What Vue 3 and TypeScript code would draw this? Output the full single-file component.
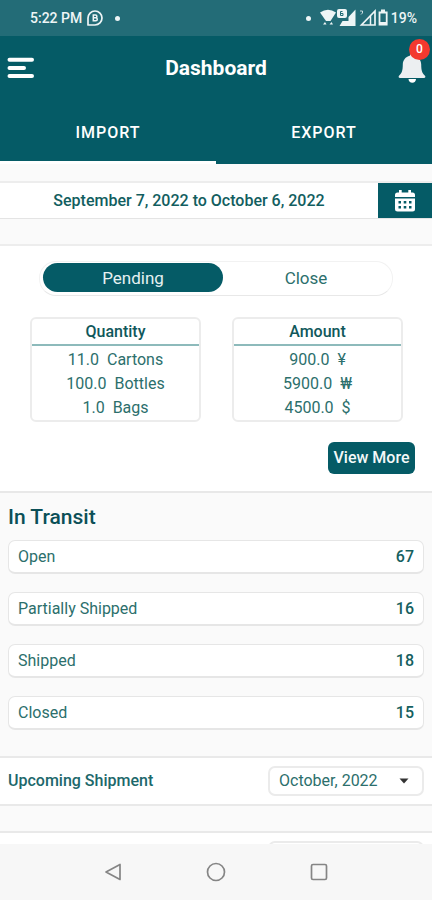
<script setup lang="ts">
import { ref } from 'vue'

interface Line {
  value: string
  unit: string
}
interface Summary {
  title: string
  lines: Line[]
}
interface TransitRow {
  label: string
  count: number
}

const tabs: string[] = ['IMPORT', 'EXPORT']
const activeTab = ref<string>('IMPORT')

const states: string[] = ['Pending', 'Close']
const activeState = ref<string>('Pending')

const summaries: Summary[] = [
  {
    title: 'Quantity',
    lines: [
      { value: '11.0', unit: 'Cartons' },
      { value: '100.0', unit: 'Bottles' },
      { value: '1.0', unit: 'Bags' },
    ],
  },
  {
    title: 'Amount',
    lines: [
      { value: '900.0', unit: '¥' },
      { value: '5900.0', unit: '₩' },
      { value: '4500.0', unit: '$' },
    ],
  },
]

const transit: TransitRow[] = [
  { label: 'Open', count: 67 },
  { label: 'Partially Shipped', count: 16 },
  { label: 'Shipped', count: 18 },
  { label: 'Closed', count: 15 },
]

const month = ref<string>('October, 2022')
</script>

<template>
  <div class="screen">
    <div class="status">
      <div class="status-side">
        <span>5:22 PM</span>
        <svg class="chat" viewBox="0 0 18 18" width="18" height="18" aria-hidden="true">
          <path d="M2 16V9a7 7 0 1 1 7 7z" fill="none" stroke="currentColor" stroke-width="1.7" stroke-linejoin="round" />
          <path d="M7.300 6h2.200a1.300 1.300 0 0 1 0 2.800H7.300zM7.300 8.800h2.500a1.500 1.500 0 0 1 0 3H7.300z" fill="none" stroke="currentColor" stroke-width="1.500" />
        </svg>
        <i class="dot"></i>
      </div>
      <div class="status-side status-right">
        <i class="dot"></i>
        <svg viewBox="0 0 70 20" width="70" height="20" aria-hidden="true">
          <path d="M1 4.500Q9 -1 17 4.500L11.500 13H7z" fill="currentColor" />
          <path d="M4 16.500l2-2.500 1.500 2.500zM10.500 16.500l2-2.500 1.500 2.500z" fill="currentColor" />
          <rect x="18" y="1" width="10" height="9" rx="2" fill="currentColor" />
          <path d="M23.500 3.500h-2v4h2.500v-2h-2" fill="none" stroke="#236c77" stroke-width="1" />
          <path d="M36.500 1.500V18H20.500l3-5h6V9z" fill="currentColor" />
          <path d="M41 3h2.500v2l-1.500 1.500" fill="none" stroke="currentColor" stroke-width="1" opacity=".8" />
          <path d="M56 3v14H42.500z" fill="none" stroke="currentColor" stroke-width="1.700" />
          <path d="M51.500 8v9" stroke="currentColor" stroke-width="1.500" />
          <path d="M60.500 4.500h7.200v12h-7.200z" fill="none" stroke="currentColor" stroke-width="1.800" />
          <path d="M62 1.500h4v3h-4zM60.500 14h7v3h-7z" fill="currentColor" />
        </svg>
        <span>19%</span>
      </div>
    </div>

    <header class="header">
      <div class="bar">
        <button class="icon-button" type="button" aria-label="Menu">
          <svg viewBox="0 0 28 22" width="28" height="22">
            <path d="M2.500 2.700h22.500M2.500 11h14.500M2.500 19h22.500" stroke="#fff" stroke-width="4" stroke-linecap="round" />
          </svg>
        </button>
        <h1>Dashboard</h1>
        <button class="icon-button bell" type="button" aria-label="Notifications">
          <svg viewBox="0 0 28 30" width="28" height="30">
            <path d="M14 0.500a2.200 2.200 0 0 0-2.200 2.200C7.500 3.700 4.800 7.200 4.800 11.500c0 6-1 8.700-3.800 11.200-.8.800-.3 2.300 1 2.300h24c1.300 0 1.800-1.500 1-2.300-2.800-2.500-3.800-5.200-3.800-11.200 0-4.300-2.700-7.800-7-8.800A2.200 2.200 0 0 0 14 .5z" fill="#eceff1" />
            <path d="M10.500 26h7.500c0 2.200-1.600 3.700-3.700 3.700s-3.800-1.500-3.800-3.700z" fill="#fff" />
          </svg>
          <span class="badge">0</span>
        </button>
      </div>
      <nav class="tabs">
        <button
          v-for="tab in tabs"
          :key="tab"
          type="button"
          class="tab"
          :class="{ active: tab === activeTab }"
          @click="activeTab = tab"
        >{{ tab }}</button>
      </nav>
    </header>

    <main class="content">
      <div class="range">
        <span class="range-text">September 7, 2022 to October 6, 2022</span>
        <button class="range-button" type="button" aria-label="Choose dates">
          <svg viewBox="0 0 20 22" width="20" height="22">
            <path d="M0 7V5q0-2.500 2.500-2.500H4V0h2.700v2.500h6.600V0H16v2.500h1.500Q20 2.500 20 5v2z" fill="#fff" />
            <path d="M0 8.500h20v10.500q0 2.500-2.500 2.500h-15Q0 21.500 0 19z" fill="#fff" />
            <path d="M3.500 11h2.500v2.500H3.500zM8.700 11h2.600v2.500H8.700zM14 11h2.500v2.500H14zM3.500 16h2.500v2.500H3.500zM8.700 16h2.600v2.500H8.700zM14 16h2.500v2.500H14z" fill="#055b66" />
          </svg>
        </button>
      </div>

      <section class="orders">
        <div class="switch">
          <button
            v-for="state in states"
            :key="state"
            type="button"
            class="switch-option"
            :class="{ active: state === activeState }"
            @click="activeState = state"
          >{{ state }}</button>
        </div>
        <div class="summaries">
          <article v-for="card in summaries" :key="card.title" class="summary">
            <h2>{{ card.title }}</h2>
            <ul>
              <li v-for="line in card.lines" :key="line.unit">
                <span>{{ line.value }}</span>
                <span>{{ line.unit }}</span>
              </li>
            </ul>
          </article>
        </div>
        <button class="more" type="button">View More</button>
      </section>

      <section class="transit">
        <h2>In Transit</h2>
        <ul>
          <li v-for="row in transit" :key="row.label">
            <span>{{ row.label }}</span>
            <span class="count">{{ row.count }}</span>
          </li>
        </ul>
      </section>

      <section class="upcoming">
        <label for="month">Upcoming Shipment</label>
        <div class="select-box">
          <select id="month" v-model="month">
            <option>October, 2022</option>
          </select>
          <svg class="caret" viewBox="0 0 10 6" width="10" height="6" aria-hidden="true">
            <path d="M0.500 0.500h9L5 5.500z" fill="#333" />
          </svg>
        </div>
      </section>

      <section class="upcoming next">
        <div class="select-box"></div>
      </section>
    </main>

    <nav class="system">
      <button type="button" aria-label="Back">
        <svg viewBox="0 0 20 20" width="20" height="20">
          <path d="M17 2.500v15L3 10z" fill="none" stroke="#858585" stroke-width="1.700" stroke-linejoin="round" />
        </svg>
      </button>
      <button type="button" aria-label="Home">
        <svg viewBox="0 0 20 20" width="20" height="20">
          <circle cx="10" cy="10" r="8.500" fill="none" stroke="#858585" stroke-width="1.700" />
        </svg>
      </button>
      <button type="button" aria-label="Recent apps">
        <svg viewBox="0 0 20 20" width="20" height="20">
          <rect x="2.500" y="2.500" width="15" height="15" rx="1.500" fill="none" stroke="#858585" stroke-width="1.700" />
        </svg>
      </button>
    </nav>
  </div>
</template>

<style>
body {
  margin: 0;
  background: #fafafa;
}
</style>

<style scoped>
* {
  box-sizing: border-box;
}
.screen {
  display: flex;
  flex-direction: column;
  height: 100vh;
  font-family: Roboto, "Liberation Sans", sans-serif;
  font-size: 16px;
  line-height: 24px;
  color: #2c6f6c;
  background: #fafafa;
}
button {
  border: 0;
  padding: 0;
  background: none;
  color: inherit;
  font: inherit;
  cursor: pointer;
}
h1,
h2,
ul {
  margin: 0;
  padding: 0;
  list-style: none;
}
svg {
  display: block;
}
.status {
  display: flex;
  flex: none;
  justify-content: space-between;
  align-items: center;
  height: 36px;
  padding: 0 15px 0 30px;
  background: #236c77;
  color: #eef5f6;
  font-size: 14px;
  font-weight: 500;
}
.status-side {
  display: flex;
  align-items: center;
  gap: 4px;
}
.status-right {
  gap: 2px;
}
.dot {
  width: 5px;
  height: 5px;
  border-radius: 50%;
  background: currentColor;
}
.status-side .chat + .dot {
  margin-left: 7px;
}
.status-right .dot {
  margin-right: 6px;
}
.header {
  flex: none;
  background: #055b66;
  color: #fff;
}
.bar {
  display: grid;
  grid-template-columns: 40px 1fr 40px;
  align-items: center;
  height: 64px;
  padding: 0 4px;
}
h1 {
  text-align: center;
  font-size: 21px;
  font-weight: 700;
}
.icon-button {
  position: relative;
  display: flex;
  justify-content: center;
  padding-right: 6px;
}
.bell {
  justify-content: flex-end;
  padding-right: 2px;
}
.badge {
  position: absolute;
  top: -14px;
  right: -2px;
  width: 21px;
  height: 21px;
  border-radius: 50%;
  background: #f3392f;
  font-size: 12px;
  font-weight: 500;
  line-height: 21px;
}
.tabs {
  display: grid;
  grid-template-columns: 1fr 1fr;
}
.tab {
  height: 64px;
  border-bottom: 3px solid transparent;
  padding-top: 5px;
  font-weight: 500;
  letter-spacing: 1px;
}
.tab.active {
  border-bottom-color: #fff;
}
.content {
  flex: 1;
  min-height: 0;
  overflow: hidden;
}
.range {
  display: flex;
  height: 38px;
  margin-top: 17px;
  border-top: 2px solid #ededed;
  border-bottom: 1px solid #e4e4e4;
  background: #fff;
  color: #125e60;
}
.range-text {
  flex: 1;
  align-self: center;
  text-align: center;
  font-weight: 500;
}
.range-button {
  display: flex;
  align-items: center;
  justify-content: center;
  width: 54px;
  background: #055b66;
}
.orders {
  display: flex;
  flex-direction: column;
  margin-top: 25px;
  padding: 15px 17px 17px;
  border-top: 2px solid #ededed;
  border-bottom: 2px solid #e8e8e8;
  background: #fff;
}
.switch {
  display: grid;
  grid-template-columns: 180px 1fr;
  margin: 0 22px;
  padding: 1px 3px 3px;
  border: 1px solid #f2f2f2;
  border-bottom-color: #e8e8e8;
  border-radius: 17px;
}
.switch-option {
  height: 29px;
  border-radius: 15px;
  font-size: 17px;
}
.switch-option.active {
  background: #055b66;
  color: #e6f1f2;
}
.summaries {
  display: grid;
  grid-template-columns: 1fr 1fr;
  gap: 31px;
  margin: 21px 12px 20px 13px;
}
.summary {
  border: 2px solid #ececec;
  border-radius: 6px;
  text-align: center;
}
.summary h2 {
  height: 27px;
  padding-top: 1px;
  border-bottom: 2px solid #8dbabb;
  color: #10585b;
  font-size: 16px;
  font-weight: 500;
}
.summary ul {
  padding: 2px 0 0;
}
.summary li {
  display: flex;
  justify-content: center;
  gap: 8px;
}
.more {
  align-self: flex-end;
  width: 87px;
  height: 32px;
  border-radius: 6px;
  background: #055b66;
  color: #f4f9f9;
  font-weight: 500;
}
.transit {
  padding: 12px 8px 26px;
}
.transit h2 {
  margin-bottom: 11px;
  color: #0b4f57;
  font-size: 21px;
  font-weight: 500;
}
.transit ul {
  display: grid;
  gap: 18px;
}
.transit li {
  display: flex;
  justify-content: space-between;
  padding: 4px 9px 3px;
  border: 1px solid #e6e6e6;
  border-bottom-width: 2px;
  border-radius: 7px;
  background: #fff;
}
.count {
  color: #155f60;
  font-weight: 500;
}
.upcoming {
  display: flex;
  align-items: center;
  justify-content: space-between;
  padding: 8px;
  border-top: 2px solid #e9e9e9;
  border-bottom: 2px solid #e9e9e9;
  background: #fff;
}
.upcoming label {
  color: #1d686b;
  font-weight: 500;
}
.select-box {
  position: relative;
  width: 156px;
  height: 30px;
  border: 2px solid #ebebeb;
  border-radius: 7px;
}
.select-box select {
  width: 100%;
  height: 100%;
  border: 0;
  padding: 0 9px;
  appearance: none;
  background: none;
  color: #2c6f6c;
  font: inherit;
}
.caret {
  position: absolute;
  top: 10px;
  right: 13px;
  pointer-events: none;
}
.next {
  justify-content: flex-end;
  margin-top: 25px;
}
.system {
  display: flex;
  flex: none;
  justify-content: center;
  align-items: center;
  gap: 83px;
  height: 56px;
  background: #f7f7f7;
}
</style>
